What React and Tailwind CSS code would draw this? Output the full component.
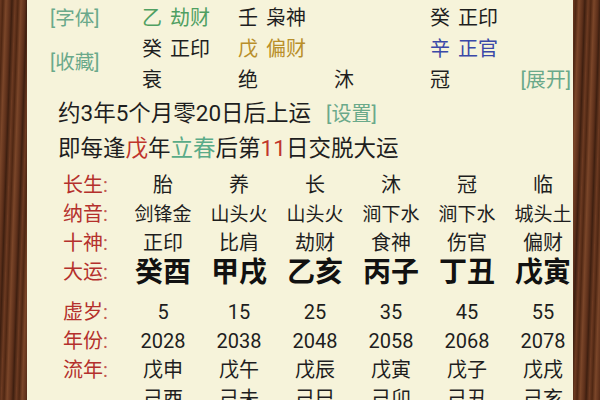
import React from "react";

const wood =
  "bg-[repeating-linear-gradient(92deg,#6e3b22_0px,#4f2713_3px,#7b4629_6px,#5c2f1a_10px,#3e1f10_12px,#6a3920_15px)]";

function Cell({ a, b, color }) {
  return (
    <div className={`flex ${color}`}>
      <span>{a}</span>
      {b ? <span className="ml-[8px]">{b}</span> : null}
    </div>
  );
}

const cols = {
  changsheng: ["胎", "养", "长", "沐", "冠", "临"],
  nayin: ["剑锋金", "山头火", "山头火", "涧下水", "涧下水", "城头土"],
  shishen: ["正印", "比肩", "劫财", "食神", "伤官", "偏财"],
  dayun: ["癸酉", "甲戌", "乙亥", "丙子", "丁丑", "戊寅"],
  xusui: ["5", "15", "25", "35", "45", "55"],
  nianfen: ["2028", "2038", "2048", "2058", "2068", "2078"],
  liunian: ["戊申", "戊午", "戊辰", "戊寅", "戊子", "戊戌"],
  liunian2: ["己酉", "己未", "己巳", "己卯", "己丑", "己亥"],
};

function Row({ label, values, valueClass = "text-[20px]", h = "h-[29px] leading-[29px]" }) {
  return (
    <>
      <div className={`${h} text-[20px] text-[#b4302c]`}>
        {label ? (
          <>
            {label}
            <span className="text-[#c25a50]">:</span>
          </>
        ) : null}
      </div>
      {values.map((v, i) => (
        <div key={i} className={`${h} text-center text-[#1e1e1e] ${valueClass}`}>
          {v}
        </div>
      ))}
    </>
  );
}

export default function App() {
  return (
    <div className="w-[600px] h-[400px] overflow-hidden flex font-['Roboto','Noto_Sans_CJK_SC',sans-serif] bg-[#5a2f1a]">
      <div className={`w-[27px] h-full ${wood}`} />
      <div className="w-[546px] h-full overflow-hidden bg-[#f6f3da] text-[#1e1e1e]">
        {/* top section */}
        <div className="-mt-[17px] pl-[23px] grid grid-cols-[92px_96px_96px_96px_1fr] grid-rows-[20px_31px_31px_31px] text-[20px] leading-[31px]">
          {/* partial row */}
          <div />
          <div className="leading-[20px] -mt-[3px]"><Cell a="丁" b="食神" color="text-[#e0893a]" /></div>
          <div className="leading-[20px] -mt-[3px]"><Cell a="庚" b="七杀" color="text-[#8a8a8a]" /></div>
          <div className="leading-[20px] -mt-[3px]"><Cell a="甲" b="比肩" color="text-[#8a8a8a]" /></div>
          <div className="leading-[20px] -mt-[3px]"><Cell a="己" b="正财" color="text-[#d8a92c]" /></div>

          {/* row 1 */}
          <div className="text-[19.5px] text-[#6aa98a]">[字体]</div>
          <Cell a="乙" b="劫财" color="text-[#4f9f62]" />
          <Cell a="壬" b="枭神" color="text-[#1e1e1e]" />
          <div />
          <Cell a="癸" b="正印" color="text-[#1e1e1e]" />

          {/* row 2 */}
          <div className="row-span-2 flex items-center pb-[6px] text-[19.5px] text-[#6aa98a]">[收藏]</div>
          <Cell a="癸" b="正印" color="text-[#1e1e1e]" />
          <Cell a="戊" b="偏财" color="text-[#b98f2a]" />
          <div />
          <Cell a="辛" b="正官" color="text-[#3a48a8]" />

          {/* row 3 */}
          <div>衰</div>
          <div>绝</div>
          <div>沐</div>
          <div className="flex justify-between pr-[2px]">
            <span>冠</span>
            <span className="text-[20px] text-[#6aa98a]">[展开]</span>
          </div>
        </div>

        {/* middle lines */}
        <div className="pl-[31px] text-[22.5px] leading-[34px]">
          <div className="flex items-baseline">
            <span>约3年5个月零20日后上运</span>
            <span className="ml-[15px] text-[20px] text-[#6aa98a]">[设置]</span>
          </div>
          <div>
            即每逢<span className="text-[#c0352b]">戊</span>年
            <span className="text-[#5aab88]">立春</span>后第
            <span className="text-[#c0352b]">11</span>日交脱大运
          </div>
        </div>

        {/* table */}
        <div className="mt-[6px] pl-[36px] grid grid-cols-[62px_repeat(6,76px)]">
          <Row label="长生" values={cols.changsheng} />
          <Row label="纳音" values={cols.nayin} valueClass="text-[19px]" />
          <Row label="十神" values={cols.shishen} />
          <Row label="大运" values={cols.dayun} valueClass="text-[28px] font-bold text-[#111]" />
          <div className="col-span-7 h-[11px]" />
          <Row label="虚岁" values={cols.xusui} />
          <Row label="年份" values={cols.nianfen} />
          <Row label="流年" values={cols.liunian} />
          <Row label="" values={cols.liunian2} />
        </div>
      </div>
      <div className={`w-[27px] h-full ${wood}`} />
    </div>
  );
}
